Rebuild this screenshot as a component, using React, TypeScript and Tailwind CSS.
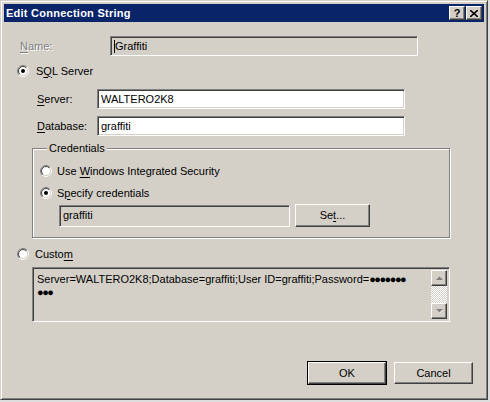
import React from "react";

const font = "font-['Tahoma','Liberation_Sans',sans-serif] text-[11px] leading-[13px] text-black";
const sunken =
  "border border-t-[#808080] border-l-[#808080] border-r-white border-b-white shadow-[inset_1px_1px_0_#404040,inset_-1px_-1px_0_#d4d0c8]";
const raised =
  "border border-t-white border-l-white border-r-[#404040] border-b-[#404040] shadow-[inset_-1px_-1px_0_#808080,inset_1px_1px_0_#d4d0c8] bg-[#d4d0c8]";

function Radio({ checked }: { checked?: boolean }) {
  return (
    <svg width="12" height="12" viewBox="0 0 12 12" className="shrink-0">
      <defs>
        <linearGradient id="rOuter" x1="0" y1="0" x2="1" y2="1">
          <stop offset="50%" stopColor="#808080" />
          <stop offset="50%" stopColor="#ffffff" />
        </linearGradient>
        <linearGradient id="rInner" x1="0" y1="0" x2="1" y2="1">
          <stop offset="50%" stopColor="#404040" />
          <stop offset="50%" stopColor="#d4d0c8" />
        </linearGradient>
      </defs>
      <circle cx="6" cy="6" r="5.5" fill="none" stroke="url(#rOuter)" />
      <circle cx="6" cy="6" r="4.5" fill="#fff" stroke="url(#rInner)" />
      {checked && <circle cx="6" cy="6" r="2" fill="#000" />}
    </svg>
  );
}

function U({ children }: { children: React.ReactNode }) {
  return <span className="underline underline-offset-[2px]">{children}</span>;
}

function TitleButton({ children }: { children: React.ReactNode }) {
  return (
    <div className={`${raised} w-[16px] h-[14px] flex items-center justify-center`}>
      {children}
    </div>
  );
}

function Arrow({ up }: { up?: boolean }) {
  return (
    <div className={`${raised} w-[16px] h-[16px] flex items-center justify-center`}>
      <svg width="7" height="4" viewBox="0 0 7 4">
        {up ? (
          <>
            <path d="M1 4.5 L4 1.5 L7 4.5 Z" fill="#fff" />
            <path d="M0 4 L3.5 0.5 L7 4 Z" fill="#808080" />
          </>
        ) : (
          <>
            <path d="M1 1 L4 4 L7 1 Z" fill="#fff" />
            <path d="M0 0 L3.5 3.5 L7 0 Z" fill="#808080" />
          </>
        )}
      </svg>
    </div>
  );
}

export default function App() {
  return (
    <div className={`${font} w-[490px] h-[402px] bg-[#dcdcdc]`}>
      <div className="w-[488px] h-[400px] bg-[#d4d0c8] border border-t-[#d4d0c8] border-l-[#d4d0c8] border-r-[#404040] border-b-[#404040] shadow-[inset_1px_1px_0_#fff,inset_-1px_-1px_0_#808080] p-[3px] flex flex-col">
        {/* Title bar */}
        <div className="h-[18px] bg-[#0a246a] flex items-center justify-between pl-[2px] pr-[2px]">
          <span className="text-white font-bold tracking-[0.25px]">Edit Connection String</span>
          <div className="flex gap-[1px]">
            <TitleButton>
              <span className="font-bold text-[11px] leading-none">?</span>
            </TitleButton>
            <TitleButton>
              <svg width="8" height="7" viewBox="0 0 8 7">
                <path d="M0 0 L8 7 M8 0 L0 7" stroke="#000" strokeWidth="1.6" />
              </svg>
            </TitleButton>
          </div>
        </div>

        {/* Name */}
        <div className="flex items-center h-[20px] mt-[14px]">
          <div className="w-[106px] pl-[16px] text-[#808080] [text-shadow:1px_1px_0_#fff]">
            <U>N</U>ame:
          </div>
          <div className={`${sunken} w-[308px] h-[20px] flex items-center pl-[3px] bg-[#d4d0c8]`}>
            <span className="w-[1px] h-[13px] bg-black" />
            <span>Graffiti</span>
          </div>
        </div>

        {/* SQL Server */}
        <div className="flex items-center h-[14px] mt-[8px] pl-[13px] gap-[7px]">
          <Radio checked />
          <span>
            S<U>Q</U>L Server
          </span>
        </div>

        {/* Server */}
        <div className="flex items-center h-[20px] mt-[11px]">
          <div className="w-[93px] pl-[33px]">
            <U>S</U>erver:
          </div>
          <div className={`${sunken} w-[308px] h-[20px] flex items-center pl-[3px] bg-white`}>
            WALTERO2K8
          </div>
        </div>

        {/* Database */}
        <div className="flex items-center h-[20px] mt-[7px]">
          <div className="w-[93px] pl-[33px]">
            <U>D</U>atabase:
          </div>
          <div className={`${sunken} w-[308px] h-[20px] flex items-center pl-[3px] bg-white`}>
            graffiti
          </div>
        </div>

        {/* Credentials */}
        <fieldset className="ml-[28px] mt-[6px] w-[418px] border border-[#808080] shadow-[inset_1px_1px_0_#fff,1px_1px_0_#fff] px-[7px] pb-[10px]">
          <legend className="ml-[7px] px-[2px] bg-[#d4d0c8]">Credentials</legend>
          <div className="flex items-center h-[14px] mt-[9px] gap-[5px]">
            <Radio />
            <span>
              Use <U>W</U>indows Integrated Security
            </span>
          </div>
          <div className="flex items-center h-[14px] mt-[8px] gap-[5px]">
            <Radio checked />
            <span>
              S<U>p</U>ecify credentials
            </span>
          </div>
          <div className="flex items-center mt-[4px] ml-[19px] gap-[5px]">
            <div className={`${sunken} w-[231px] h-[22px] flex items-center pl-[3px] bg-[#d4d0c8]`}>
              graffiti
            </div>
            <div className={`${raised} w-[75px] h-[23px] flex items-center justify-center`}>
              <span>
                Se<U>t</U>...
              </span>
            </div>
          </div>
        </fieldset>

        {/* Custom */}
        <div className="flex items-center h-[14px] mt-[9px] pl-[13px] gap-[6px]">
          <Radio />
          <span>
            Custo<U>m</U>
          </span>
        </div>

        <div className={`${sunken} ml-[28px] mt-[6px] w-[418px] h-[55px] bg-[#d4d0c8] flex p-[2px]`}>
          <div className="flex-1 pl-[2px] pt-[3px] leading-[13px]">
            Server=WALTERO2K8;Database=graffiti;User ID=graffiti;Password=
            <span className="tracking-[-1.5px]">●●●●●●●</span>
            <br />
            <span className="tracking-[-1.5px]">●●●</span>
          </div>
          <div className="w-[16px] flex flex-col">
            <Arrow up />
            <div className="flex-1 bg-[repeating-conic-gradient(#ffffff_0%_25%,#d4d0c8_0%_50%)] bg-[length:2px_2px]" />
            <Arrow />
          </div>
        </div>

        {/* Buttons */}
        <div className="flex justify-end gap-[8px] mt-[40px] pr-[11px]">
          <div className={`${raised} w-[78px] h-[22px] flex items-center justify-center outline outline-1 outline-black`}>
            OK
          </div>
          <div className={`${raised} w-[79px] h-[22px] flex items-center justify-center`}>
            Cancel
          </div>
        </div>
      </div>
    </div>
  );
}
